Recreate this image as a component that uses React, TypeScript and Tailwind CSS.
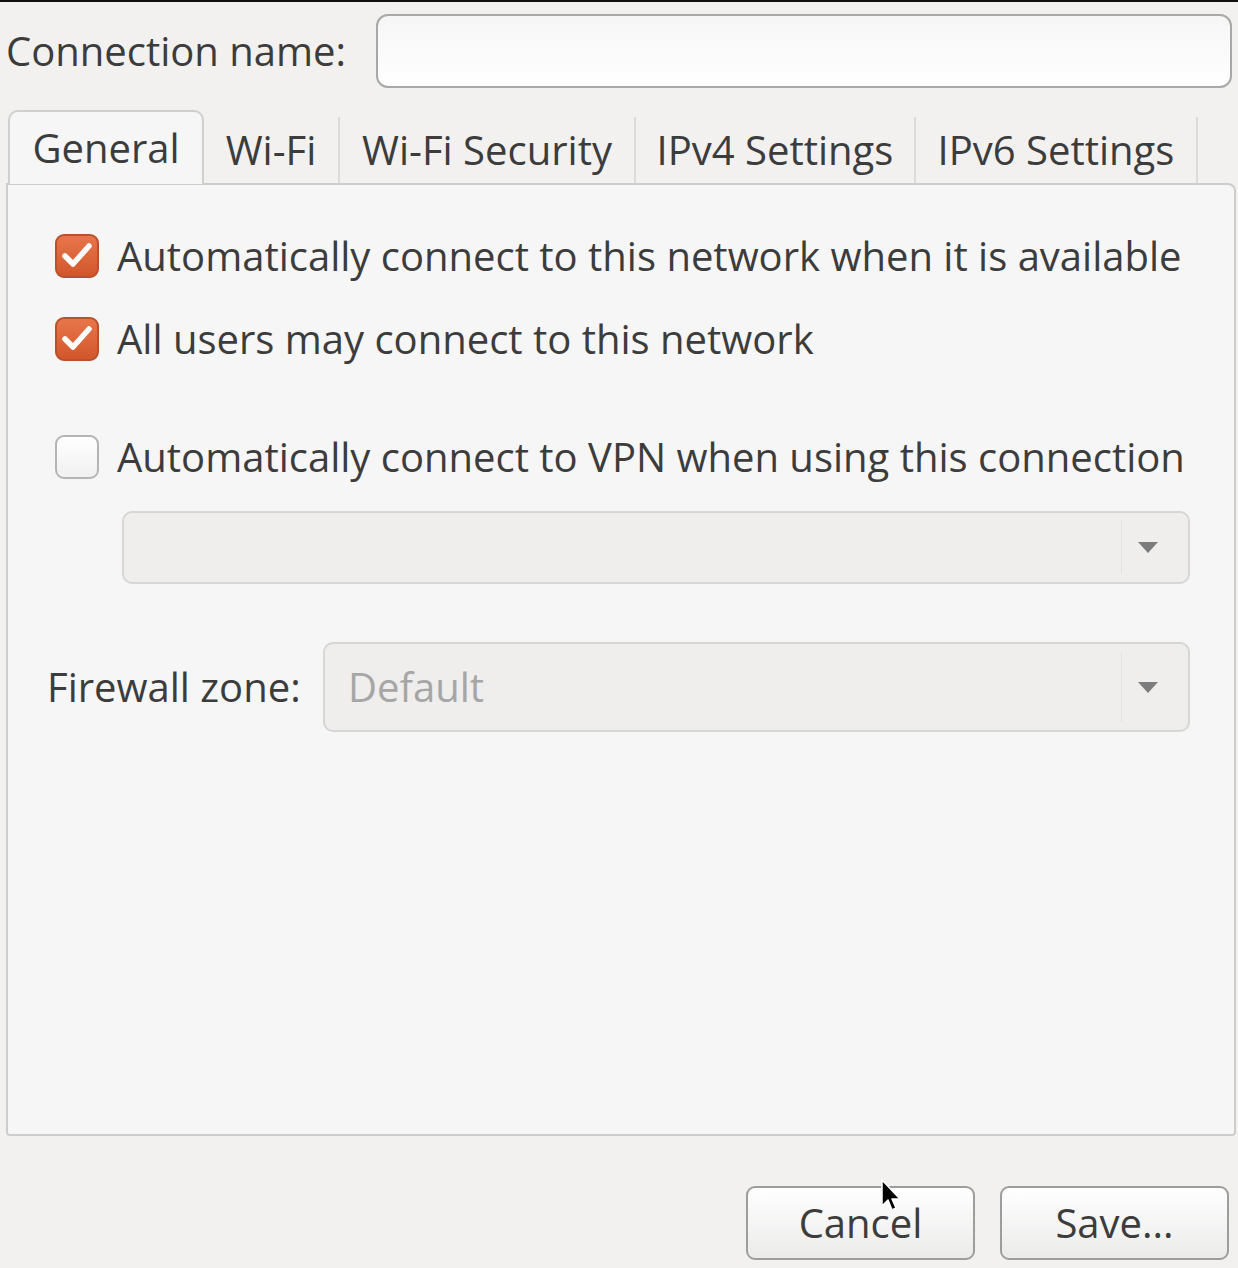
import React from 'react'

const font = { fontFamily: '"Open Sans", "Noto Sans", sans-serif' }

function CheckBox({ checked }: { checked: boolean }) {
  if (!checked) {
    return (
      <span className="w-[44px] h-[44px] shrink-0 rounded-[9px] border-2 border-[#b4b4b4] bg-gradient-to-b from-[#ffffff] to-[#f0f0f0]" />
    )
  }
  return (
    <span className="w-[44px] h-[44px] shrink-0 rounded-[9px] border-2 border-[#b9522c] bg-gradient-to-b from-[#e8754a] to-[#d2572b] flex items-center justify-center">
      <svg width="34" height="34" viewBox="0 0 34 34">
        <path d="M5 17 L13 25 L29 7" fill="none" stroke="#ffffff" strokeWidth="5.5" strokeLinecap="round" strokeLinejoin="round" />
      </svg>
    </span>
  )
}

function Combo({ value, className }: { value?: string; className: string }) {
  return (
    <div className={`flex items-center rounded-[10px] border-2 border-[#d6d6d4] bg-[#efeeed] ${className}`}>
      <span className="flex-1 pl-[23px] text-[40px] leading-none text-[#a6a6a6]">{value}</span>
      <span className="w-px self-stretch my-[8px] bg-[#e2e2e0]" />
      <span className="w-[66px] flex items-center pl-[15px]">
        <svg width="22" height="13" viewBox="0 0 22 13">
          <path d="M1 1 H21 L11 12 Z" fill="#7c7c7c" />
        </svg>
      </span>
    </div>
  )
}

function Tab({ label, width, active }: { label: string; width: string; active?: boolean }) {
  if (active) {
    return (
      <div className={`${width} h-[74px] -mb-px relative z-10 rounded-t-[10px] border-2 border-b-0 border-[#cfcfcd] bg-[#f6f6f6] flex items-center justify-center text-[40px] text-[#3c3c3c]`}>
        {label}
      </div>
    )
  }
  return (
    <div className={`${width} h-[66px] self-end border-r-2 border-[#dcdcda] flex items-center justify-center text-[40px] text-[#3c3c3c]`}>
      {label}
    </div>
  )
}

export default function App() {
  return (
    <div className="w-[1238px] h-[1268px] relative overflow-hidden bg-[#f2f1f0] border-t-2 border-[#111111] flex flex-col" style={font}>
      {/* connection name */}
      <div className="flex items-center pt-[12px] pl-[6px] pr-[6px]">
        <span className="text-[40px] text-[#3c3c3c]">Connection name:</span>
        <div className="ml-auto w-[856px] h-[74px] rounded-[12px] border-2 border-[#a8a8a6] bg-gradient-to-b from-[#f6f6f6] to-[#ffffff]" />
      </div>

      {/* tabs */}
      <div className="flex items-end pl-[8px] mt-[22px] h-[73px]">
        <Tab label="General" width="w-[196px]" active />
        <Tab label="Wi-Fi" width="w-[136px]" />
        <Tab label="Wi-Fi Security" width="w-[296px]" />
        <Tab label="IPv4 Settings" width="w-[280px]" />
        <Tab label="IPv6 Settings" width="w-[282px]" />
      </div>

      {/* panel */}
      <div className="ml-[6px] mr-[2px] h-[953px] rounded-tr-[8px] rounded-b-[4px] border-2 border-[#cdcdcb] bg-[#f6f6f6] pl-[47px] pr-[44px] pt-[49px] flex flex-col text-[#3c3c3c]">
        <label className="flex items-center gap-[18px] h-[44px]">
          <CheckBox checked />
          <span className="text-[40px] whitespace-nowrap">Automatically connect to this network when it is available</span>
        </label>
        <label className="flex items-center gap-[18px] h-[44px] mt-[39px]">
          <CheckBox checked />
          <span className="text-[40px] whitespace-nowrap">All users may connect to this network</span>
        </label>
        <label className="flex items-center gap-[18px] h-[44px] mt-[74px]">
          <CheckBox checked={false} />
          <span className="text-[40px] whitespace-nowrap">Automatically connect to VPN when using this connection</span>
        </label>
        <Combo className="ml-[67px] mt-[32px] h-[73px]" />
        <div className="flex items-center mt-[58px] -ml-[8px]">
          <span className="text-[40px] whitespace-nowrap w-[276px]">Firewall zone:</span>
          <Combo value="Default" className="flex-1 h-[90px]" />
        </div>
      </div>

      {/* buttons */}
      <div className="flex justify-end gap-[25px] pr-[9px] mt-[50px]">
        <button className="w-[229px] h-[74px] rounded-[9px] border-2 border-[#9d9d9b] bg-gradient-to-b from-[#ffffff] to-[#ebebea] text-[40px] text-[#3c3c3c]">Cancel</button>
        <button className="w-[229px] h-[74px] rounded-[9px] border-2 border-[#9d9d9b] bg-gradient-to-b from-[#ffffff] to-[#ebebea] text-[40px] text-[#3c3c3c]">Save...</button>
      </div>

      {/* mouse pointer */}
      <svg className="absolute left-[880px] top-[1176px]" width="22" height="36" viewBox="0 0 22 36">
        <path d="M2 2 L2 28 L8 22 L12 32 L16 30 L12 21 L20 21 Z" fill="#000000" stroke="#ffffff" strokeWidth="1.5" strokeLinejoin="round" />
      </svg>
    </div>
  )
}
